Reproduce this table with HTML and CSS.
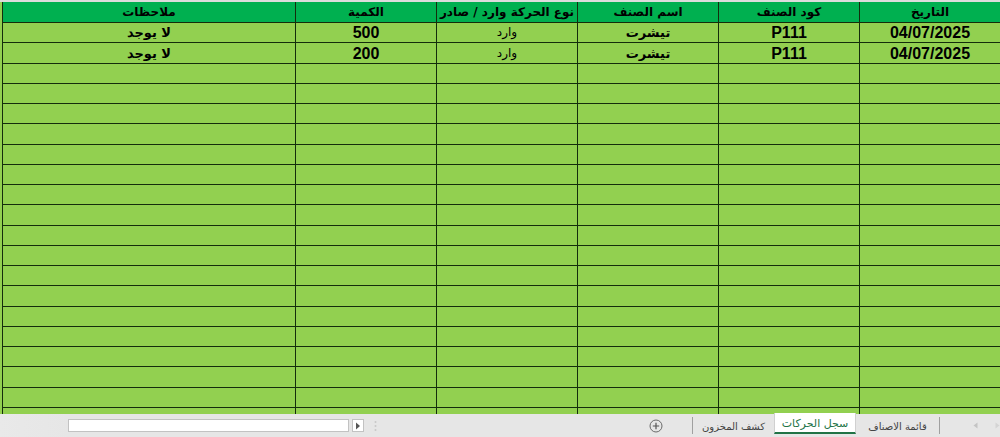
FILE: index.html
```html
<!DOCTYPE html>
<html lang="ar">
<head>
<meta charset="utf-8">
<title>سجل الحركات</title>
<link rel="stylesheet" href="styles.css">
</head>
<body>
<div class="app">
  <div class="sheet">
    <table class="grid" dir="rtl">
      <colgroup>
        <col class="c-std"><col class="c-std"><col class="c-std"><col class="c-std"><col class="c-std"><col class="c-notes">
      </colgroup>
      <thead>
        <tr><th>التاريخ</th><th>كود الصنف</th><th>اسم الصنف</th><th>نوع الحركة وارد / صادر</th><th>الكمية</th><th>ملاحظات</th></tr>
      </thead>
      <tbody>
        <tr><td class="num">04/07/2025</td><td class="num">P111</td><td class="arb">تيشرت</td><td class="ar">وارد</td><td class="num">500</td><td class="arb">لا يوجد</td></tr>
        <tr><td class="num">04/07/2025</td><td class="num">P111</td><td class="arb">تيشرت</td><td class="ar">وارد</td><td class="num">200</td><td class="arb">لا يوجد</td></tr>
        <tr><td></td><td></td><td></td><td></td><td></td><td></td></tr>
        <tr><td></td><td></td><td></td><td></td><td></td><td></td></tr>
        <tr><td></td><td></td><td></td><td></td><td></td><td></td></tr>
        <tr><td></td><td></td><td></td><td></td><td></td><td></td></tr>
        <tr><td></td><td></td><td></td><td></td><td></td><td></td></tr>
        <tr><td></td><td></td><td></td><td></td><td></td><td></td></tr>
        <tr><td></td><td></td><td></td><td></td><td></td><td></td></tr>
        <tr><td></td><td></td><td></td><td></td><td></td><td></td></tr>
        <tr><td></td><td></td><td></td><td></td><td></td><td></td></tr>
        <tr><td></td><td></td><td></td><td></td><td></td><td></td></tr>
        <tr><td></td><td></td><td></td><td></td><td></td><td></td></tr>
        <tr><td></td><td></td><td></td><td></td><td></td><td></td></tr>
        <tr><td></td><td></td><td></td><td></td><td></td><td></td></tr>
        <tr><td></td><td></td><td></td><td></td><td></td><td></td></tr>
        <tr><td></td><td></td><td></td><td></td><td></td><td></td></tr>
        <tr><td></td><td></td><td></td><td></td><td></td><td></td></tr>
        <tr><td></td><td></td><td></td><td></td><td></td><td></td></tr>
        <tr><td></td><td></td><td></td><td></td><td></td><td></td></tr>
      </tbody>
    </table>
  </div>
  <div class="tabbar">
    <div class="hscroll-lead"></div>
    <div class="hscroll"></div>
    <div class="scroll-btn">
      <svg width="6" height="8" viewBox="0 0 6 8"><polygon points="1,0.5 5,4 1,7.5" fill="#555"/></svg>
    </div>
    <div class="dots">
      <svg width="3" height="12" viewBox="0 0 3 12"><circle cx="1.5" cy="2" r="1" fill="#c8c8c8"/><circle cx="1.5" cy="6" r="1" fill="#c8c8c8"/><circle cx="1.5" cy="10" r="1" fill="#c8c8c8"/></svg>
    </div>
    <div class="spacer"></div>
    <div class="add">
      <svg width="14" height="14" viewBox="0 0 14 14"><circle cx="7" cy="7" r="6" fill="none" stroke="#6a6a6a" stroke-width="1"/><path d="M7 3.8V10.2M3.8 7H10.2" stroke="#555" stroke-width="1.2"/></svg>
    </div>
    <div class="sep sep-left"></div>
    <div class="tabs" dir="rtl">
      <div class="tab tab-1">قائمة الاصناف</div>
      <div class="tab tab-active">سجل الحركات</div>
      <div class="tab tab-3">كشف المخزون</div>
    </div>
    <div class="sep"></div>
    <div class="nav">
      <svg class="nav-prev" width="5" height="7" viewBox="0 0 5 7"><polygon points="4.5,0.5 0.5,3.5 4.5,6.5" fill="#c4c4c4"/></svg>
      <svg class="nav-next" width="5" height="7" viewBox="0 0 5 7"><polygon points="0.5,0.5 4.5,3.5 0.5,6.5" fill="#d4d4d4"/></svg>
    </div>
  </div>
</div>
</body>
</html>
```

FILE: styles.css
```css
html, body {
  margin: 0;
  padding: 0;
}

body {
  width: 1000px;
  height: 437px;
  overflow: hidden;
  background: #e6e6e6;
  font-family: "Liberation Sans", "DejaVu Sans", sans-serif;
}

.app {
  display: flex;
  flex-direction: column;
  width: 1000px;
  height: 437px;
}

.sheet {
  height: 414px;
  overflow: hidden;
  background: #92d050;
  border-top: 2px solid #dcdcdc;
  box-sizing: border-box;
  flex: none;
}

.grid {
  margin-left: 2px;
  width: 998px;
  table-layout: fixed;
  border-collapse: separate;
  border-spacing: 0;
}

.c-std { width: 141px; }
.c-notes { width: 293px; }

.grid th,
.grid td {
  box-sizing: border-box;
  height: 20px;
  padding: 0 2px;
  border-left: 1px solid #142d0c;
  border-bottom: 1px solid #142d0c;
  text-align: center;
  vertical-align: middle;
  white-space: nowrap;
  overflow: hidden;
  color: #000;
}

.grid th {
  background: #00b050;
  font-family: "DejaVu Sans", sans-serif;
  font-weight: bold;
  font-size: 12px;
  line-height: 19px;
  padding-top: 1px;
}

.grid td {
  background: #92d050;
  line-height: 19px;
}

.grid tbody tr:nth-child(4n+2) td {
  height: 21px;
}

.num {
  font-family: "Liberation Sans", sans-serif;
  font-weight: bold;
  font-size: 16px;
}

.arb {
  font-family: "DejaVu Sans", sans-serif;
  font-weight: bold;
  font-size: 13px;
}

.ar {
  font-family: "DejaVu Sans", sans-serif;
  font-size: 12px;
  letter-spacing: 1.5px;
}

/* sheet tab bar */
.tabbar {
  flex: 1;
  display: flex;
  align-items: center;
  background: #e6e6e6;
}

.hscroll-lead {
  width: 68px;
  align-self: stretch;
  background: linear-gradient(to right, #e9e9e9, #e6e6e6);
  flex: none;
}

.hscroll {
  width: 281px;
  height: 13px;
  box-sizing: border-box;
  border: 1px solid #c2c2c2;
  background: #fff;
  flex: none;
}

.scroll-btn {
  margin-left: 3px;
  width: 12px;
  height: 13px;
  box-sizing: border-box;
  border: 1px solid #c2c2c2;
  background: #fff;
  display: flex;
  align-items: center;
  justify-content: center;
  flex: none;
}

.dots {
  margin-left: 10px;
  display: flex;
  align-items: center;
  flex: none;
}

.spacer {
  flex: 1;
}

.add {
  width: 14px;
  height: 14px;
  display: flex;
  flex: none;
}

.sep {
  width: 1px;
  height: 17px;
  background: #a0a0a0;
  flex: none;
}

.sep-left {
  margin-left: 29px;
}

.tabs {
  display: flex;
  align-self: stretch;
  flex: none;
}

.tab {
  display: flex;
  align-items: center;
  justify-content: center;
  font-family: "DejaVu Sans", sans-serif;
  font-size: 10px;
  color: #444;
  box-sizing: border-box;
  padding-top: 1px;
}

.tab-1 { width: 83px; }
.tab-3 { width: 81px; }

.tab-active {
  width: 82px;
  height: 21px;
  margin-top: -1px;
  background: #fff;
  color: #217346;
  border-bottom: 2px solid #217346;
  border-left: 1px solid #d0d0d0;
  border-right: 1px solid #d0d0d0;
  font-size: 11px;
}

.nav {
  width: 60px;
  display: flex;
  align-items: center;
  flex: none;
}

.nav-prev {
  margin-left: 33px;
}

.nav-next {
  margin-left: 17px;
}
```
